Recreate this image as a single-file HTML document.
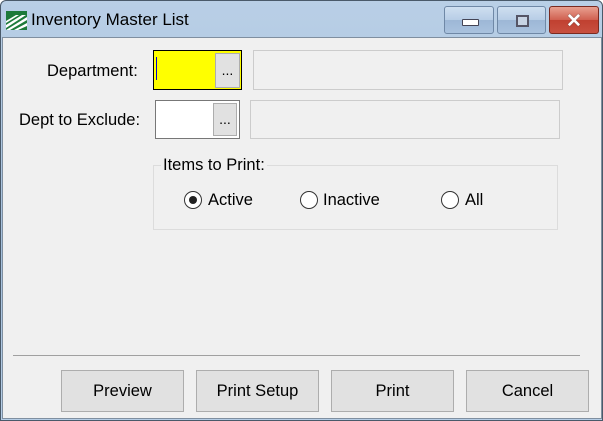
<!DOCTYPE html>
<html><head><style>
body{margin:0;width:603px;height:421px;overflow:hidden;font-family:"Liberation Sans",sans-serif;}
.win{position:absolute;left:0;top:0;width:601px;height:419px;border:1px solid #4a5a6a;border-radius:6px 6px 0 0;background:linear-gradient(#b9cfe6,#a4bfdc 60%,#b5cde6);}
.client{position:absolute;left:1px;top:36px;width:598px;height:380px;background:#f0f0f0;border:1px solid #7f8fa0;}
.a{position:absolute;}
.t{font-size:16.5px;color:#000;white-space:nowrap;}
.box{position:absolute;border:1px solid #ccc;background:#f0f0f0;}
.btn{position:absolute;background:#e1e1e1;border:1px solid #adadad;font-size:16.5px;text-align:center;line-height:40px;}
.radio{position:absolute;width:18px;height:18px;border:1px solid #333;border-radius:50%;background:#fff;box-sizing:border-box;}
.tb{position:absolute;top:5px;height:28px;border:1px solid #6f88a6;border-radius:3px;box-sizing:border-box;background:linear-gradient(#cfdff0,#b7cde6 50%,#9db7d6 50%,#a9c2de);}
</style></head><body>
<div class="win">
<svg class="a" style="left:5px;top:10px" width="21" height="19" viewBox="0 0 21 19"><rect width="21" height="19" fill="#1d7a3a"/><path d="M0 19 L21 6 L21 9 L4 19Z M8 19 L21 12 L21 15 L12 19Z M0 14 L16 4 L20 4 L0 17Z M0 10 L10 4 L13 4 L0 12Z" fill="#fff"/><rect width="21" height="3" fill="#1d7a3a"/></svg>
<div class="a t" style="left:30px;top:9px;font-size:17px">Inventory Master List</div>
<div class="tb" style="left:443px;width:50px"><div class="a" style="left:17px;top:12px;width:15px;height:5px;background:#fff;border:1px solid #445;border-radius:1px"></div></div>
<div class="tb" style="left:496px;width:49px"><div class="a" style="left:18px;top:8px;width:9px;height:8px;border:2px solid #556;background:#c8d4e4"></div></div>
<div class="tb" style="left:548px;width:50px;border-color:#7a2a20;background:linear-gradient(#e8a090,#d06050 50%,#c04030 50%,#c85040)"><div class="a" style="left:16px;top:3px;color:#fff;font-weight:bold;font-size:19px;text-shadow:0 0 1px #333">✕</div></div>
<div class="client">
<div class="a t" style="left:44px;top:24px">Department:</div>
<div class="a" style="left:150px;top:12px;width:87px;height:38px;border:1px solid #000;background:#ff0"><div class="a" style="left:2px;top:6px;width:1px;height:23px;background:#0000d0"></div><div class="a" style="left:61px;top:2px;width:23px;height:33px;background:#e1e1e1;border:1px solid #adadad;text-align:center;font-size:14px;line-height:33px">...</div></div>
<div class="box" style="left:250px;top:12px;width:308px;height:38px"></div>
<div class="a t" style="left:16px;top:73px">Dept to Exclude:</div>
<div class="a" style="left:152px;top:62px;width:83px;height:37px;border:1px solid #777;background:#fff"><div class="a" style="left:57px;top:2px;width:22px;height:31px;background:#e1e1e1;border:1px solid #adadad;text-align:center;font-size:14px;line-height:31px">...</div></div>
<div class="box" style="left:247px;top:62px;width:308px;height:37px"></div>
<div class="box" style="left:150px;top:127px;width:403px;height:63px;border-color:#dcdcdc"></div>
<div class="a t" style="left:158px;top:118px;background:#f0f0f0;padding:0 2px">Items to Print:</div>
<div class="radio" style="left:181px;top:153px"><div class="a" style="left:4px;top:4px;width:8px;height:8px;border-radius:50%;background:#222"></div></div>
<div class="a t" style="left:205px;top:153px">Active</div>
<div class="radio" style="left:297px;top:153px"></div>
<div class="a t" style="left:320px;top:153px">Inactive</div>
<div class="radio" style="left:438px;top:153px"></div>
<div class="a t" style="left:462px;top:153px">All</div>
<div class="a" style="left:10px;top:317px;width:567px;height:1px;background:#a0a0a0"></div>
<div class="btn" style="left:58px;top:332px;width:121px;height:40px">Preview</div>
<div class="btn" style="left:193px;top:332px;width:121px;height:40px">Print Setup</div>
<div class="btn" style="left:328px;top:332px;width:121px;height:40px">Print</div>
<div class="btn" style="left:463px;top:332px;width:121px;height:40px">Cancel</div>
</div>
</div>
</body></html>
